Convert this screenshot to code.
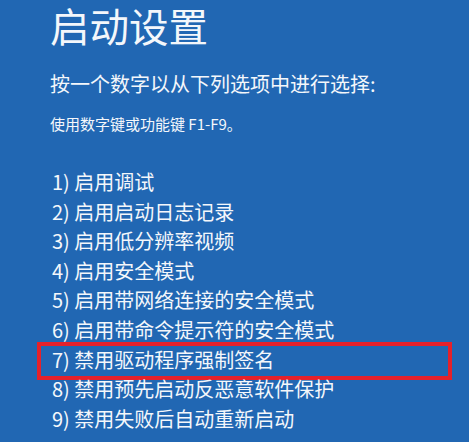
import React from 'react';

const options = [
  '1) 启用调试',
  '2) 启用启动日志记录',
  '3) 启用低分辨率视频',
  '4) 启用安全模式',
  '5) 启用带网络连接的安全模式',
  '6) 启用带命令提示符的安全模式',
  '7) 禁用驱动程序强制签名',
  '8) 禁用预先启动反恶意软件保护',
  '9) 禁用失败后自动重新启动',
];

const App = () => {
  return (
    <div
      className="w-[469px] h-[442px] overflow-hidden bg-[#2167b3] text-[#f4f7fb]"
      style={{ fontFamily: '"Noto Sans CJK SC", "Noto Sans", sans-serif' }}
    >
      <div className="pl-[50px] pt-[1px]">
        <h1 className="text-[39.5px] leading-[48px] font-normal">启动设置</h1>
        <p className="mt-[22px] text-[20px] leading-[26px]">按一个数字以从下列选项中进行选择:</p>
        <p className="mt-[17px] text-[15px] leading-[20px]">使用数字键或功能键 F1-F9。</p>
        <ul className="mt-[33px]">
          {options.map((item, i) => (
            <li key={item} className="relative text-[20px] leading-[29.6px] pl-[2px]">
              {item}
              {i === 6 && (
                <span className="absolute left-[-13px] w-[415px] top-[-3px] bottom-[-6px] border-[4px] border-[#e5212b]" />
              )}
            </li>
          ))}
        </ul>
      </div>
    </div>
  );
};

export default App;
